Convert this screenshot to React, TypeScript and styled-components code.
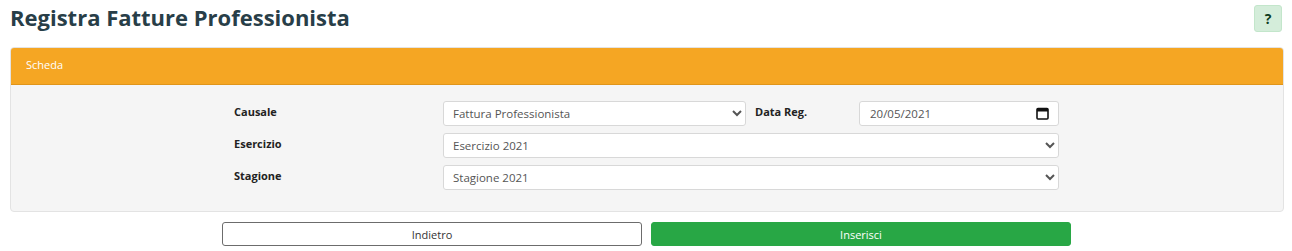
import styled, { createGlobalStyle } from "styled-components";

const GlobalStyle = createGlobalStyle`
  body {
    margin: 0;
    background: #fff;
    font-family: "Open Sans", "Liberation Sans", sans-serif;
  }
  * { box-sizing: border-box; }
`;

const Page = styled.div`
  padding: 0 8px 0 10px;
`;

const TitleBar = styled.div`
  display: flex;
  justify-content: space-between;
  align-items: flex-start;
  height: 47px;
`;

const Title = styled.h1`
  margin: 2px 0 0;
  font-size: 22px;
  font-weight: 700;
  color: #283e48;
`;

const HelpButton = styled.button`
  width: 28px;
  height: 27px;
  margin: 5px 2px 0 0;
  border: 1px solid #c3e6cb;
  border-radius: 3px;
  background: #d4edda;
  color: #0f3d1f;
  font-family: inherit;
  font-size: 14px;
  font-weight: 700;
  padding: 0;
`;

const Card = styled.div`
  width: 1274px;
  border: 1px solid #e3e3e3;
  border-radius: 4px;
  overflow: hidden;
  background: #f5f5f5;
`;

const CardHeader = styled.div`
  height: 37px;
  background: #f5a623;
  border-bottom: 1px solid #e0951a;
  color: #fff;
  font-size: 11px;
  padding: 9px 15px 0;
`;

const CardBody = styled.div`
  padding: 16px 0 21px 223px;
`;

const FormGrid = styled.div`
  display: grid;
  grid-template-columns: 209px 303px 113px 200px;
  row-gap: 7px;
`;

const Label = styled.label<{ $indent?: number }>`
  font-size: 11px;
  font-weight: 700;
  color: #222;
  padding: 3px 0 0 ${(p) => p.$indent ?? 0}px;
`;

const Select = styled.select<{ $span?: number }>`
  grid-column: span ${(p) => p.$span ?? 1};
  height: 25px;
  border: 1px solid #d8d8d8;
  border-radius: 3px;
  background: #fff;
  font-family: inherit;
  font-size: 11.5px;
  color: #555;
  padding: 0 4px 0 5px;
`;

const DateWrap = styled.div`
  position: relative;
  height: 25px;
`;

const DateInput = styled.input`
  width: 100%;
  height: 25px;
  border: 1px solid #d8d8d8;
  border-radius: 3px;
  background: #fff;
  font-family: inherit;
  font-size: 11.5px;
  color: #555;
  padding: 0 10px;
`;

const CalendarIcon = styled.svg`
  position: absolute;
  right: 10px;
  top: 6px;
`;

const ButtonRow = styled.div`
  display: flex;
  gap: 9px;
  padding: 10px 0 0 212px;
`;

const ActionButton = styled.button<{ $primary?: boolean }>`
  width: 420px;
  height: 24px;
  border-radius: 3px;
  font-family: inherit;
  font-size: 11px;
  border: 1px solid ${(p) => (p.$primary ? "#28a745" : "#6c6c6c")};
  background: ${(p) => (p.$primary ? "#28a745" : "#fff")};
  color: ${(p) => (p.$primary ? "#fff" : "#333")};
`;

export default function App() {
  return (
    <Page>
      <GlobalStyle />
      <TitleBar>
        <Title>Registra Fatture Professionista</Title>
        <HelpButton>?</HelpButton>
      </TitleBar>
      <Card>
        <CardHeader>Scheda</CardHeader>
        <CardBody>
          <FormGrid>
            <Label>Causale</Label>
            <Select defaultValue="fp">
              <option value="fp">Fattura Professionista</option>
            </Select>
            <Label $indent={9}>Data Reg.</Label>
            <DateWrap>
              <DateInput readOnly value="20/05/2021" />
              <CalendarIcon width="13" height="13" viewBox="0 0 13 13">
                <rect x="1" y="1.5" width="11" height="10.5" rx="1" fill="none" stroke="#111" strokeWidth="1.6" />
                <rect x="1" y="1.5" width="11" height="3" fill="#111" />
              </CalendarIcon>
            </DateWrap>
            <Label>Esercizio</Label>
            <Select $span={3} defaultValue="2021">
              <option value="2021">Esercizio 2021</option>
            </Select>
            <Label>Stagione</Label>
            <Select $span={3} defaultValue="2021">
              <option value="2021">Stagione 2021</option>
            </Select>
          </FormGrid>
        </CardBody>
      </Card>
      <ButtonRow>
        <ActionButton>Indietro</ActionButton>
        <ActionButton $primary>Inserisci</ActionButton>
      </ButtonRow>
    </Page>
  );
}
